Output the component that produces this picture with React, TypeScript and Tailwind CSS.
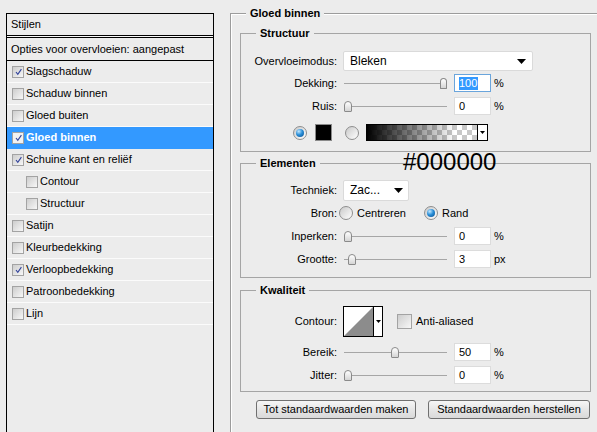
import React from "react";

type Item = { label: string; checked?: boolean; active?: boolean; indent?: boolean };

const items: Item[] = [
  { label: "Slagschaduw", checked: true },
  { label: "Schaduw binnen" },
  { label: "Gloed buiten" },
  { label: "Gloed binnen", checked: true, active: true },
  { label: "Schuine kant en reliëf", checked: true },
  { label: "Contour", indent: true },
  { label: "Structuur", indent: true },
  { label: "Satijn" },
  { label: "Kleurbedekking" },
  { label: "Verloopbedekking", checked: true },
  { label: "Patroonbedekking" },
  { label: "Lijn" },
];

const Tick = () => (
  <svg width="9" height="9" viewBox="0 0 9 9">
    <path d="M2 5 L3.8 7.3 L7.4 2.2" fill="none" stroke="#33449c" strokeWidth="1.15" />
  </svg>
);

function Checkbox({ checked, light, size = 12 }: { checked?: boolean; light?: boolean; size?: number }) {
  return (
    <span
      className={`flex shrink-0 items-center justify-center border border-[#a3a3a3] ${
        size === 12 ? "h-[12px] w-[12px]" : "h-[15px] w-[15px]"
      } ${light ? "bg-[#f2f2f2]" : "bg-[linear-gradient(135deg,#cdcdcd,#f7f7f7)]"}`}
    >
      {checked && <Tick />}
    </span>
  );
}

function Radio({ on }: { on?: boolean }) {
  return (
    <span className="flex h-[14px] w-[14px] shrink-0 items-center justify-center rounded-full border border-[#8e8e8e] bg-[linear-gradient(135deg,#c9c9c9,#ffffff)]">
      {on && (
        <span className="h-[8px] w-[8px] rounded-full bg-[radial-gradient(circle_at_35%_30%,#c4e8ff_0,#2a8fd8_45%,#0b4c8c_100%)]" />
      )}
    </span>
  );
}

const Arrow = ({ w = 9, h = 5 }: { w?: number; h?: number }) => (
  <svg width={w} height={h} viewBox={`0 0 ${w} ${h}`}>
    <polygon points={`0,0 ${w},0 ${w / 2},${h}`} fill="#000" />
  </svg>
);

function Label({ children }: { children: React.ReactNode }) {
  return <div className="w-[96px] shrink-0 text-right">{children}</div>;
}

function Slider({ at }: { at: number }) {
  return (
    <div className="ml-[7px] flex h-[12px] w-[103px] shrink-0 items-center bg-[linear-gradient(#a6a6a6,#a6a6a6)] bg-[length:100%_1px] bg-center bg-no-repeat">
      <span
        style={{ marginLeft: at }}
        className="h-[11px] w-[8px] rounded-t-[4px] rounded-b-[1px] border border-[#8a8a8a] bg-[linear-gradient(#ffffff,#d5d5d5)]"
      />
    </div>
  );
}

function NumBox({ value, focused }: { value: string; focused?: boolean }) {
  return (
    <div
      className={`ml-[7px] flex h-[18px] w-[37px] shrink-0 items-center bg-white pl-[4px] border ${
        focused ? "border-[#6aa5dc]" : "border-[#dcdcdc]"
      }`}
    >
      {focused ? <span className="bg-[#3399ff] pr-[1px] text-white">{value}</span> : value}
    </div>
  );
}

function SliderRow({ label, at, value, unit = "%", focused, className }: {
  label: string;
  at: number;
  value: string;
  unit?: string;
  focused?: boolean;
  className: string;
}) {
  return (
    <div className={`flex h-[18px] items-center ${className}`}>
      <Label>{label}</Label>
      <Slider at={at} />
      <NumBox value={value} focused={focused} />
      <span className="ml-[3px]">{unit}</span>
    </div>
  );
}

function Group({ title, className, children }: { title: string; className: string; children: React.ReactNode }) {
  return (
    <div className={`ml-[9px] flex w-[351px] shrink-0 flex-col border border-[#a5a5a5] ${className}`}>
      <div className="-mt-[7px] ml-[15px] self-start bg-[#ececec] px-[4px] font-bold">{title}</div>
      {children}
    </div>
  );
}

function StylesList() {
  return (
    <div className="ml-[6px] mt-[13px] flex h-[440px] w-[208px] shrink-0 flex-col border border-black">
      <div className="flex h-[22px] items-center border-b border-black pl-[4px]">Stijlen</div>
      <div className="h-[1px] bg-[#f8f8f8]" />
      <div className="flex h-[24px] items-center border-y border-black pl-[4px]">
        Opties voor overvloeien: aangepast
      </div>
      {items.map((it) => (
        <div
          key={it.label}
          className={`flex h-[22px] items-center gap-[2px] border-b ${it.indent ? "pl-[19px]" : "pl-[5px]"} ${
            it.active ? "border-[#3399ff] bg-[#3399ff] font-bold text-white" : "border-[#fbfbfb]"
          }`}
        >
          <Checkbox checked={it.checked} light={it.active} />
          <span>{it.label}</span>
        </div>
      ))}
    </div>
  );
}

export default function App() {
  return (
    <div className="relative flex h-[432px] w-[597px] items-start overflow-hidden bg-[#ececec] font-['Liberation_Sans',Arial,sans-serif] text-[11px] leading-[13px] text-black">
      <StylesList />

      <div className="ml-[16px] mt-[13px] flex h-[440px] w-[380px] shrink-0 flex-col border-l border-t border-[#9c9c9c] shadow-[inset_1px_1px_0_#ffffff]">
        <div className="-mt-[7px] ml-[15px] self-start bg-[#ececec] px-[4px] font-bold">Gloed binnen</div>

        {/* Structuur */}
        <Group title="Structuur" className="mt-[13px] h-[119px]">
          <div className="mt-[11px] flex h-[20px] items-center">
            <Label>Overvloeimodus:</Label>
            <div className="ml-[6px] flex h-[20px] w-[190px] items-center justify-between rounded-[2px] border border-[#dadada] bg-white pl-[6px] pr-[6px] text-[12px]">
              <span>Bleken</span>
              <Arrow />
            </div>
          </div>
          <SliderRow label="Dekking:" at={96} value="100" focused className="mt-[3px]" />
          <SliderRow label="Ruis:" at={0} value="0" className="mt-[5px]" />
          <div className="mt-[9px] flex h-[17px] items-center pl-[52px]">
            <Radio on />
            <span className="ml-[8px] h-[17px] w-[17px] border border-[#8a8a8a] bg-black" />
            <span className="ml-[13px]">
              <Radio />
            </span>
            <div className="ml-[7px] flex h-[17px] w-[122px] border border-black">
              <div className="flex-1 bg-[linear-gradient(to_right,#000_0%,rgba(0,0,0,0)_80%),repeating-conic-gradient(#c8c8c8_0_25%,#ffffff_0_50%)] bg-[length:100%_100%,10px_10px]" />
              <div className="flex w-[10px] items-center justify-center border-l border-black bg-white">
                <Arrow w={5} h={3} />
              </div>
            </div>
          </div>
        </Group>

        {/* Elementen */}
        <Group title="Elementen" className="mt-[11px] h-[115px]">
          <div className="mt-[10px] flex h-[21px] items-center">
            <Label>Techniek:</Label>
            <div className="ml-[6px] flex h-[21px] w-[66px] items-center justify-between rounded-[2px] border border-[#dadada] bg-white pl-[6px] pr-[5px] text-[12px]">
              <span>Zac...</span>
              <Arrow />
            </div>
          </div>
          <div className="mt-[4px] flex h-[16px] items-center">
            <Label>Bron:</Label>
            <div className="ml-[2px] flex w-[85px] items-center gap-[4px]">
              <Radio />
              <span>Centreren</span>
            </div>
            <div className="flex items-center gap-[4px]">
              <Radio on />
              <span>Rand</span>
            </div>
          </div>
          <SliderRow label="Inperken:" at={0} value="0" className="mt-[6px]" />
          <SliderRow label="Grootte:" at={4} value="3" unit="px" className="mt-[5px]" />
        </Group>

        {/* Kwaliteit */}
        <Group title="Kwaliteit" className="mt-[12px] h-[102px]">
          <div className="mt-[9px] flex h-[31px] items-center">
            <Label>Contour:</Label>
            <div className="ml-[6px] flex h-[31px] w-[40px] border border-black bg-white">
              <svg width="29" height="29" viewBox="0 0 29 29" className="shrink-0">
                <polygon points="0,29 29,0 29,29" fill="#8c8c8c" />
              </svg>
              <div className="flex flex-1 items-center justify-center border-l border-black">
                <Arrow w={5} h={3} />
              </div>
            </div>
            <div className="ml-[14px] flex items-center gap-[4px]">
              <Checkbox size={15} />
              <span>Anti-aliased</span>
            </div>
          </div>
          <SliderRow label="Bereik:" at={47} value="50" className="mt-[6px]" />
          <SliderRow label="Jitter:" at={0} value="0" className="mt-[5px]" />
        </Group>

        <div className="ml-[25px] mt-[8px] flex gap-[12px]">
          <button className="h-[19px] w-[160px] rounded-[3px] border border-[#707070] bg-[linear-gradient(#f6f6f6,#e6e6e6_50%,#d9d9d9)] text-[11px]">
            Tot standaardwaarden maken
          </button>
          <button className="h-[19px] w-[162px] rounded-[3px] border border-[#707070] bg-[linear-gradient(#f6f6f6,#e6e6e6_50%,#d9d9d9)] text-[11px]">
            Standaardwaarden herstellen
          </button>
        </div>
      </div>

      <div className="absolute left-[403px] top-[150px] text-[24px] leading-[24px]">#000000</div>
    </div>
  );
}
